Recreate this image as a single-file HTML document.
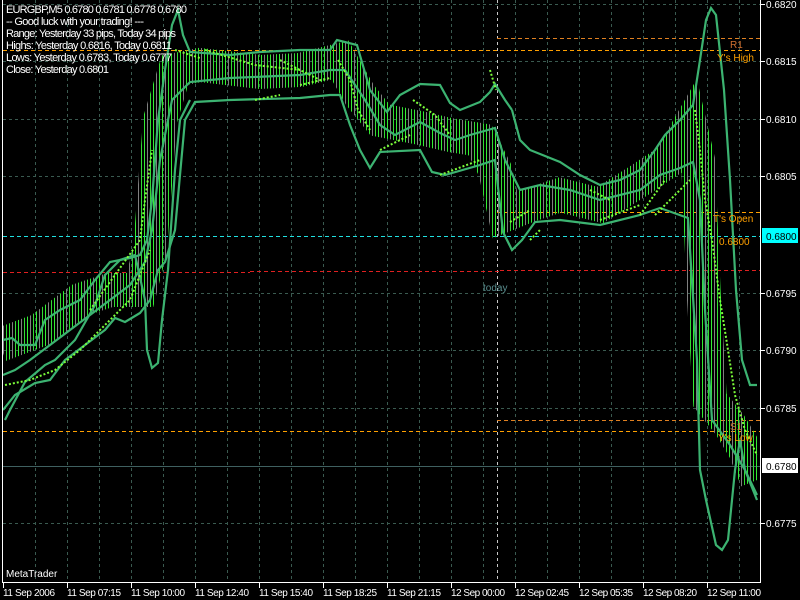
<!DOCTYPE html>
<html><head><meta charset="utf-8"><style>
html,body{margin:0;padding:0;background:#000;width:800px;height:600px;overflow:hidden}
svg{display:block}
text{font-family:"Liberation Sans",sans-serif;font-size:10px}
.hd{font-size:11px}
</style></head><body>
<svg width="800" height="600" viewBox="0 0 800 600" xmlns="http://www.w3.org/2000/svg">
<defs>
<pattern id="bars" x="0" y="0" width="9" height="600" patternUnits="userSpaceOnUse">
<rect x="0" y="0" width="1" height="600" fill="#33ee33"/>
<rect x="3" y="0" width="1" height="600" fill="#808080"/>
<rect x="6" y="0" width="1" height="600" fill="#33dd33"/>
</pattern>
<clipPath id="cl"><rect x="3" y="0" width="755" height="582"/></clipPath>
</defs>
<rect width="800" height="600" fill="#000"/>
<g stroke="#3a5a50" stroke-width="1" stroke-dasharray="3 3">
<path d="M35.5 0V582M67.5 0V582M99.5 0V582M131.5 0V582M163.5 0V582M195.5 0V582M227.5 0V582M259.5 0V582M291.5 0V582M323.5 0V582M355.5 0V582M387.5 0V582M419.5 0V582M451.5 0V582M483.5 0V582M515.5 0V582M547.5 0V582M579.5 0V582M611.5 0V582M643.5 0V582M675.5 0V582M707.5 0V582M739.5 0V582"/>
<path d="M3 4.5H760M3 61.5H760M3 119.5H760M3 176.5H760M3 293.5H760M3 350.5H760M3 408.5H760M3 523.5H760"/>
</g>
<path d="M497.5 0V582" stroke="#c8c8c8" stroke-dasharray="3 3"/>
<g stroke-dasharray="4 3" stroke-width="1">
<path d="M497 38.5H760" stroke="#e08020"/>
<path d="M3 50.5H760" stroke="#ffa000"/>
<path d="M497 212.5H760" stroke="#ffa000"/>
<path d="M3 236.5H760" stroke="#20e0e0"/>
<path d="M3 272.5H250M250 271.5H500M500 270.5H760" stroke="#e02020"/>
<path d="M497 420.5H760" stroke="#e08020"/>
<path d="M3 431.5H760" stroke="#ffa000"/>
</g>
<path d="M3 466.5H760" stroke="#3f6060"/>
<g clip-path="url(#cl)">
<path d="M0 345L40 330L80 300L110 290L140 290L150 250L160 120L175 70L200 65L260 72L300 70L340 60L360 95L380 120L420 128L450 135L480 140L495 170L505 215L530 205L560 195L600 205L640 180L670 160L690 125L698 160L704 300L710 400L730 425L745 450L757 480" fill="none" stroke="url(#bars)" stroke-width="34"/>
</g>
<g fill="none" stroke="#3cb371" stroke-width="2.2">
<path d="M3 340L12 338L20 345L35 345L45 320L60 310L80 300L95 280L110 262L130 258L140 255L147 240L152 200L158 120L165 70L172 25L178 10L183 35L190 52L230 55L260 52L300 50L330 50L337 40L357 45L370 90L387 112L400 95L420 84L440 85L450 103L460 110L480 102L490 92L495 84L505 100L512 110"/>
<path d="M512 110L520 140L530 150L560 162L580 175L600 185L620 180L640 170L655 150L665 135L680 120L693 105L700 60L706 20L711 8L716 15L724 90L730 180L736 290L742 360L750 385L757 385"/>
<path d="M3 375L15 370L30 360L50 345L70 330L90 315L110 300L130 285L145 262L152 230L160 160L172 100L190 82L230 78L300 75L330 70L345 70L365 100L380 125L395 135L420 122L440 133L455 140L470 135L495 128L505 160L520 190L540 185L570 190L600 200L640 190L660 175L680 168L693 162L700 200L705 310L712 420L730 445L745 470L757 495"/>
<path d="M3 410L15 395L35 383L50 380L65 360L85 345L105 330L115 318L125 322L140 313L150 300L158 270L165 262L175 230L185 120L195 102L230 100L300 98L330 95L340 95L350 125L360 150L370 168L380 152L420 150L432 172L445 175L480 165L495 160L503 232L512 250L522 240L535 222L560 220L600 225L640 215L660 208L688 218L697 360L700 470L706 500L716 545L722 550L728 540L735 470L740 440L745 470L757 500"/>
<path d="M5 420L10 410L25 382L45 365L55 360L75 340L95 305L105 275L120 260L135 255L145 300L147 350L152 368L158 363L162 320L168 270L175 170L180 120L190 100"/>
</g>
<g fill="none" stroke="#7cff3a" stroke-width="2" stroke-dasharray="2 2">
<path d="M5 385L30 380L55 370L80 350L110 320L130 300L150 250"/>
<path d="M90 310L140 240L145 200L152 150"/>
<path d="M175 50L200 58M205 50L255 65L300 70M280 60L320 80"/>
<path d="M255 100L280 95M300 85L330 78"/>
<path d="M338 60L350 80L358 110L370 130"/>
<path d="M380 150L410 135M440 175L480 160"/>
<path d="M413 100L435 115L450 135"/>
<path d="M490 70L496 90"/>
<path d="M510 222L530 210M530 240L540 230"/>
<path d="M590 190L610 200M600 220L640 205"/>
<path d="M640 215L665 180M655 215L690 180"/>
<path d="M695 110L700 150L705 200L712 240L720 300L728 350L735 395L745 430L757 455"/>
</g>
<path d="M2.5 0V582.5H760.5V0" fill="none" stroke="#fff"/>
<g stroke="#fff"><path d="M3.5 582V588M67.5 582V588M131.5 582V588M195.5 582V588M259.5 582V588M323.5 582V588M387.5 582V588M451.5 582V588M515.5 582V588M579.5 582V588M643.5 582V588M707.5 582V588"/>
<path d="M760 4.5H765M760 61.5H765M760 119.5H765M760 176.5H765M760 293.5H765M760 350.5H765M760 408.5H765M760 523.5H765"/></g>
<g fill="#fff">
<text x="766" y="8">0.6820</text><text x="766" y="65">0.6815</text><text x="766" y="123">0.6810</text><text x="766" y="180">0.6805</text>
<text x="766" y="297">0.6795</text><text x="766" y="354">0.6790</text><text x="766" y="412">0.6785</text><text x="766" y="527">0.6775</text>
</g>
<rect x="762" y="228" width="36" height="15" fill="#00ffff"/><text x="766" y="240" fill="#000">0.6800</text>
<rect x="762" y="458" width="36" height="15" fill="#fff"/><text x="766" y="470" fill="#000">0.6780</text>
<g fill="#fff">
<text x="3" y="596" textLength="52">11 Sep 2006</text><text x="67" y="596" textLength="54">11 Sep 07:15</text><text x="131" y="596" textLength="54">11 Sep 10:00</text><text x="195" y="596" textLength="54">11 Sep 12:40</text><text x="259" y="596" textLength="54">11 Sep 15:40</text><text x="323" y="596" textLength="54">11 Sep 18:25</text><text x="387" y="596" textLength="54">11 Sep 21:15</text><text x="451" y="596" textLength="54">12 Sep 00:00</text><text x="515" y="596" textLength="54">12 Sep 02:45</text><text x="579" y="596" textLength="54">12 Sep 05:35</text><text x="643" y="596" textLength="54">12 Sep 08:20</text><text x="707" y="596" textLength="54">12 Sep 11:00</text>
<text x="6" y="577">MetaTrader</text>
<text class="hd" x="6" y="13" textLength="181">EURGBP,M5  0.6780 0.6781 0.6778 0.6780</text>
<text class="hd" x="6" y="25" textLength="138">-- Good luck with your trading! ---</text>
<text class="hd" x="6" y="37" textLength="170">Range: Yesterday 33 pips, Today 34 pips</text>
<text class="hd" x="6" y="49" textLength="166">Highs: Yesterday 0.6816, Today 0.6811</text>
<text class="hd" x="6" y="61" textLength="166">Lows:  Yesterday 0.6783, Today 0.6777</text>
<text class="hd" x="6" y="73" textLength="103">Close: Yesterday 0.6801</text>
</g>
<g>
<text x="730" y="48" fill="#d07030">R1</text>
<text x="717" y="61" fill="#ffa000">Y's High</text>
<text x="713" y="222" fill="#ffa000">T's Open</text>
<text x="719" y="245" fill="#ffa000">0.6800</text>
<text x="730" y="430" fill="#d07030">S1</text>
<text x="718" y="441" fill="#ffa000">Y's Low</text>
<text x="483" y="291" fill="#5a8f90">today</text>
</g>
</svg>
</body></html>
